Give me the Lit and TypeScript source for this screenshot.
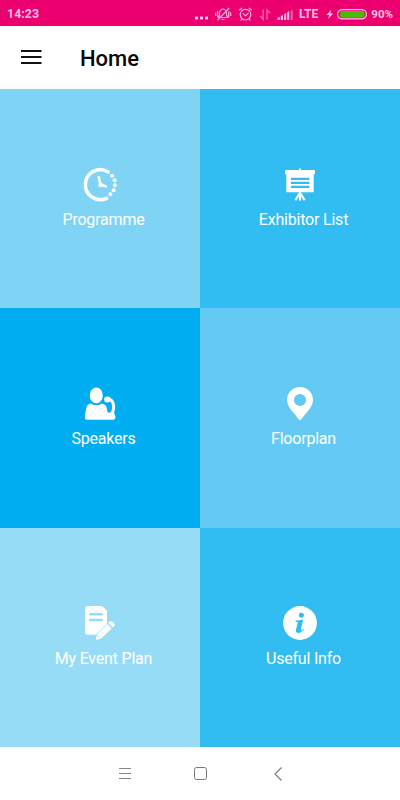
import { LitElement, html, svg, css } from "lit";
import { customElement } from "lit/decorators.js";

const icons = {
  programme: svg`<g fill="none" stroke="#fff" stroke-linecap="round" stroke-linejoin="round">
      <path d="M28.2 6.9A15 15 0 1 0 26.6 33.3" stroke-width="3.5"/>
      <path d="M18.8 12.2L20.3 19.6L25.7 21.3" stroke-width="2.6"/></g>
    <g fill="#fff"><circle cx="20.5" cy="20" r="2.2"/><circle cx="32.1" cy="10.8" r="2"/><circle cx="34.7" cy="15.2" r="2"/><circle cx="35" cy="20.3" r="2"/><circle cx="33.7" cy="25.2" r="2"/><circle cx="30.4" cy="29.3" r="2"/></g>`,
  exhibitor: svg`<path fill="#fff" fill-rule="evenodd" d="M19 5V3.4h2V5h14v4.3h-1.3v18H6.3v-18H5V5ZM11 12.8v2.2h18.3v-2.2Zm0 4v2.2h18.3v-2.2Zm0 4v2.2h18.3v-2.2Z"/>
    <path fill="none" stroke="#fff" stroke-width="2.1" d="M20 27v8.6M19.5 28.5L15.3 35.3M20.5 28.5L24.7 35.3"/>`,
  speakers: svg`<g fill="#fff"><ellipse cx="16.3" cy="10.4" rx="6.5" ry="8"/>
      <path d="M11 18.4Q16.3 22.3 21.6 18.4Q25.8 19.2 26.6 22.4L27.6 27.5H34.3Q34.2 29.5 35.4 31.2Q35.4 34.7 33 34.7H7.2Q4.7 34.7 4.8 31.8L6.2 23Q7 19.2 11 18.4Z"/>
      <ellipse cx="27.4" cy="14.5" rx="3.3" ry="3"/></g>
    <path fill="none" stroke="#fff" stroke-width="3" d="M28.5 13.6C33.5 15 35.2 22 32 28.5"/>`,
  floorplan: svg`<path fill="#fff" fill-rule="evenodd" d="M20 2A13 13 0 0 0 7 15C7 22.5 15.8 29.5 18.7 34.3Q20 36.2 21.3 34.3C24.2 29.5 33 22.5 33 15A13 13 0 0 0 20 2ZM20 8.9a6.1 6.1 0 1 1 0 12.2a6.1 6.1 0 1 1 0-12.2Z"/>`,
  plan: svg`<path fill="#fff" fill-rule="evenodd" d="M8 1H22.2L27 5.8V18.5L16 29.8H8Q5 29.8 5 26.8V4Q5 1 8 1ZM10.3 8a1.3 1.3 0 0 0 0 2.6H21.7a1.3 1.3 0 0 0 0-2.6ZM10.3 13.7a1.3 1.3 0 0 0 0 2.6H21.7a1.3 1.3 0 0 0 0-2.6Z"/>
    <path fill="#fff" d="M15.6 34.9L17.2 29.3L27.2 19L31.6 23.4L21.2 33.6ZM28.2 18.1L29.9 16.4Q31 15.4 32.1 16.4L34.4 18.7Q35.4 19.7 34.4 20.7L32.6 22.5Z"/>
    <path class="cut" d="M17.7 30.7L20 33" stroke-width=".8"/>`,
  info: svg`<circle cx="20" cy="18" r="16.9" fill="#fff"/><g fill="#31bcf2"><circle cx="21.4" cy="10.3" r="2.5"/>
    <path d="M15.5 15.7Q18.8 15.3 23.2 14.5L20.9 24.4Q20.7 25.8 21.7 25.2L23.5 23.7L24.1 24.3Q21.3 28 17.8 27.9Q15.4 27.6 15.9 25.1L17.6 18.1Q17.8 17.1 17 17L15.4 16.8Z"/></g>`,
};

const tiles = [
  { label: "Programme", tone: "sky", icon: icons.programme },
  { label: "Exhibitor List", tone: "azure", icon: icons.exhibitor },
  { label: "Speakers", tone: "deep lower", icon: icons.speakers },
  { label: "Floorplan", tone: "mid lower", icon: icons.floorplan },
  { label: "My Event Plan", tone: "pale lowest", icon: icons.plan },
  { label: "Useful Info", tone: "azure lowest", icon: icons.info },
];

@customElement("app-root")
export class AppRoot extends LitElement {
  static styles = css`
    :host { display: flex; flex-direction: column; width: 400px; height: 800px; overflow: hidden; background: #fff; font-family: Roboto, "Liberation Sans", sans-serif; }
    svg { display: block; flex: none; }
    .status { height: 26px; flex: none; display: flex; align-items: center; background: #ec0070; color: #ffc4e2; font-size: 12px; font-weight: 700; padding: 1px 7px 0 7px; box-sizing: border-box; }
    .time { flex: 1; letter-spacing: .1px; font-size: 12.3px; }
    .signals { margin-right: 5px; }
    .power { margin: 0 3px 0 8px; }
    .pct { font-size: 11.5px; }
    .bar { height: 63px; flex: none; display: flex; align-items: flex-start; padding: 23px 0 0 21px; box-sizing: border-box; gap: 38px; }
    h1 { margin: -4px 0 0; font-size: 22px; font-weight: 500; line-height: 28px; color: #080808; }
    .grid { flex: 1; display: grid; grid-template-columns: 1fr 1fr; grid-template-rows: repeat(3, 1fr); }
    .tile { display: flex; flex-direction: column; align-items: center; padding-top: 76px; color: #fff; }
    .lower { padding-top: 76.7px; }
    .lowest { padding-top: 77.34px; }
    .label { font-size: 16px; letter-spacing: -.2px; line-height: 20px; margin-top: 5px; padding-left: 7px; white-space: nowrap; }
    .lower .label { margin-top: 4px; }
    .lowest .label { margin-top: 4px; }
    .sky { background: #7fd4f6; }
    .azure { background: #31bcf2; }
    .deep { background: #00adf0; }
    .mid { background: #64caf3; }
    .pale { background: #97dcf7; }
    .cut { stroke: #97dcf7; }
    .nav { height: 53px; flex: none; display: flex; align-items: center; padding-left: 118px; box-sizing: border-box; }
    .home { margin: 0 65px 0 60px; }
  `;

  render() {
    return html`
      <div class="status">
        <span class="time">14:23</span>
        <svg class="signals" width="100" height="20" viewBox="194 3 100 20" fill="none" stroke="#ffb3d9" stroke-width="1.2">
          <g fill="#ffd0e7" stroke="none"><rect x="195" y="15.6" width="3" height="2.8"/><rect x="200" y="15.6" width="3" height="2.8"/><rect x="205" y="15.6" width="3" height="2.8"/></g>
          <path d="M218.5 16.5Q220 15 219.5 12Q219.7 8.5 223 8Q226.4 8.5 226.5 12Q226.3 15 228 16.5ZM221.5 18.5h3M229.2 7L217.5 19.3M217.6 10v6M215.7 11.5v3.5M228.8 10v6M230.7 11.5v3.5"/>
          <circle cx="245.5" cy="13.6" r="5.3"/><path d="M242.7 12.2L245.3 14.8L248.5 12.3M239.2 9.3L242.2 7M248.8 7L251.8 9.3M241.7 18L240.6 19.5M249.3 18L250.4 19.5"/>
          <g stroke="#f765aa" stroke-width="1.4"><path d="M263.2 8.5V18.2L260.2 15M267 18.5V9L270 12.2"/></g>
          <g fill="#ffb9dc" stroke="none"><path d="M277.5 19v-2.3l2.3-1V19ZM280.8 19v-4l2.2-1V19ZM284 19v-5.8l2.2-1.3V19ZM287.2 19v-7.7l2-1.2V19Z"/><path fill="#f765aa" d="M290.7 19V9.7l2-1V19Z"/></g>
        </svg>
        <span>LTE</span>
        <svg class="power" width="42" height="16" viewBox="326 5 42 16">
          <path fill="#ffc4e2" d="M331.5 8.5L326.5 14H329.4L327.7 18.3L333.3 12.4H330.2Z"/>
          <rect x="337.6" y="8.7" width="28.8" height="9.2" rx="4.6" fill="none" stroke="#ffc4e2" stroke-width="1.2"/>
          <rect x="340" y="10" width="24.5" height="6.7" rx="2.5" fill="#4db80b"/>
        </svg>
        <span class="pct">90%</span>
      </div>
      <header class="bar">
        <svg width="21" height="16" viewBox="0 0 21 16"><path d="M0 2h20.5M0 8h20.5M0 14h20.5" stroke="#111" stroke-width="2"/></svg>
        <h1>Home</h1>
      </header>
      <main class="grid">
        ${tiles.map((t) => html`<div class="tile ${t.tone}">
          <svg width="40" height="40" viewBox="0 0 40 40">${t.icon}</svg>
          <span class="label">${t.label}</span>
        </div>`)}
      </main>
      <footer class="nav">
        <svg width="14" height="14" viewBox="0 0 14 14"><path d="M1 1.5h12M1 6.5h12M1 11.5h12" stroke="#858585"/></svg>
        <svg class="home" width="16" height="16" viewBox="0 0 16 16"><rect x="2.5" y="1.5" width="12" height="12" rx="2" fill="none" stroke="#777"/></svg>
        <svg width="10" height="16" viewBox="0 0 10 16"><path d="M8.5 1.5L2 8L8.5 14.5" fill="none" stroke="#777" stroke-width="1.1"/></svg>
      </footer>`;
  }
}
